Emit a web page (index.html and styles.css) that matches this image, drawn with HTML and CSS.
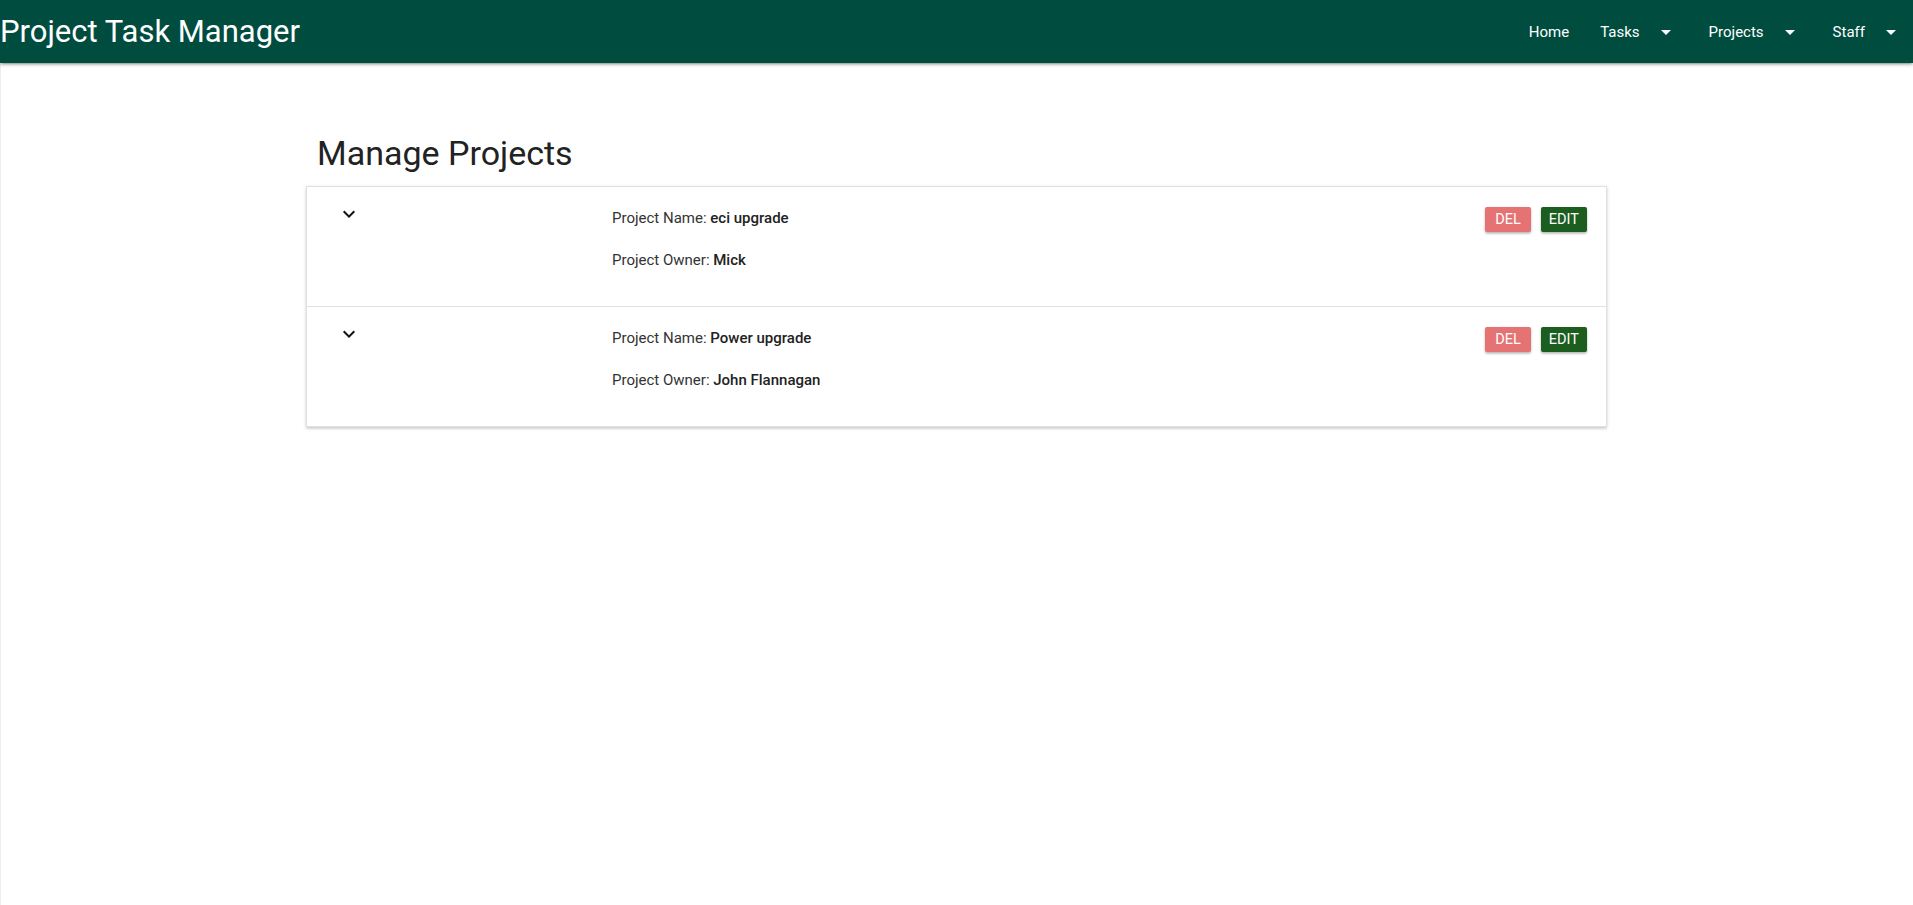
FILE: index.html
```html
<!DOCTYPE html>
<html lang="en">
<head>
<meta charset="utf-8">
<title>Project Task Manager</title>
<link rel="stylesheet" href="styles.css">
</head>
<body>
<nav class="navbar">
  <a class="brand" href="#">Project Task Manager</a>
  <ul class="nav-links">
    <li><a href="#">Home</a></li>
    <li><a href="#">Tasks<svg class="caret" viewBox="0 0 24 24" width="24" height="24"><path d="M7 10l5 5 5-5z" fill="#fff"/></svg></a></li>
    <li><a href="#">Projects<svg class="caret" viewBox="0 0 24 24" width="24" height="24"><path d="M7 10l5 5 5-5z" fill="#fff"/></svg></a></li>
    <li><a href="#" class="last">Staff<svg class="caret" viewBox="0 0 24 24" width="24" height="24"><path d="M7 10l5 5 5-5z" fill="#fff"/></svg></a></li>
  </ul>
</nav>
<main class="page">
  <div class="container">
    <h1 class="title">Manage Projects</h1>
    <ul class="collection">
      <li class="item">
        <div class="toggle"><svg viewBox="0 0 24 24" width="24" height="24"><path d="M16.59 8.59L12 13.17 7.41 8.59 6 10l6 6 6-6z" fill="#111"/></svg></div>
        <div class="info">
          <p>Project Name: <b>eci upgrade</b></p>
          <p>Project Owner: <b>Mick</b></p>
        </div>
        <div class="actions">
          <button class="btn del">DEL</button>
          <button class="btn edit">EDIT</button>
        </div>
      </li>
      <li class="item">
        <div class="toggle"><svg viewBox="0 0 24 24" width="24" height="24"><path d="M16.59 8.59L12 13.17 7.41 8.59 6 10l6 6 6-6z" fill="#111"/></svg></div>
        <div class="info">
          <p>Project Name: <b>Power upgrade</b></p>
          <p>Project Owner: <b>John Flannagan</b></p>
        </div>
        <div class="actions">
          <button class="btn del">DEL</button>
          <button class="btn edit">EDIT</button>
        </div>
      </li>
    </ul>
  </div>
</main>
</body>
</html>
```
FILE: styles.css
```css
* { box-sizing: border-box; }
html, body { margin: 0; padding: 0; }
body {
  font-family: Roboto, "Noto Sans", "Liberation Sans", sans-serif;
  background: #fff;
  color: rgba(0,0,0,0.87);
  overflow-x: hidden;
}
.navbar {
  position: relative;
  z-index: 2;
  height: 63px;
  background: #004d40;
  display: flex;
  align-items: center;
  justify-content: space-between;
  box-shadow: 0 2px 2px 0 rgba(0,0,0,0.14), 0 3px 1px -2px rgba(0,0,0,0.12), 0 1px 5px 0 rgba(0,0,0,0.2);
  overflow: hidden;
}
.brand {
  color: #fff;
  text-decoration: none;
  font-size: 31px;
  line-height: 63px;
}
.nav-links {
  list-style: none;
  margin: 0 -5px 0 0;
  padding: 0;
  display: flex;
  height: 63px;
}
.nav-links a {
  display: flex;
  align-items: center;
  height: 63px;
  padding: 0 15px;
  color: #fff;
  text-decoration: none;
  font-size: 15px;
}
.nav-links li + li a { padding-left: 16px; }
.caret { margin-left: 14px; display: block; }
.page {
  border-left: 1px solid #ededed;
  min-height: calc(100vh - 63px);
  padding-top: 70px;
}
.container {
  width: 1301px;
  margin: 0 auto 0 305px;
}
.title {
  font-size: 34px;
  font-weight: 400;
  color: #222;
  margin: 0 0 13px 11px;
  line-height: 40px;
}
.collection {
  list-style: none;
  margin: 0;
  padding: 0;
  border: 1px solid #e0e0e0;
  box-shadow: 0 2px 2px 0 rgba(0,0,0,0.10), 0 1px 4px 0 rgba(0,0,0,0.12);
}
.item {
  display: flex;
  height: 120px;
  border-bottom: 1px solid #e0e0e0;
}
.item:last-child { border-bottom: none; height: 119px; }
.toggle {
  width: 305px;
  padding: 15px 0 0 30px;
}
.toggle svg { display: block; }
.info {
  flex: 1;
  padding-top: 21px;
}
.info p {
  margin: 0 0 21px 0;
  font-size: 15px;
  line-height: 21px;
  color: #333;
}
.info b {
  font-weight: 500;
  color: #222;
}
.actions {
  display: flex;
  gap: 10px;
  padding: 20px 19px 0 0;
  align-items: flex-start;
}
.btn {
  border: none;
  border-radius: 2px;
  height: 25px;
  font-family: Roboto, "Noto Sans", "Liberation Sans", sans-serif;
  font-size: 14.5px;
  font-weight: 400;
  color: #fff;
  line-height: 25px;
  box-shadow: 0 2px 2px 0 rgba(0,0,0,0.14), 0 1px 3px 0 rgba(0,0,0,0.18);
  cursor: pointer;
}
.btn.del { background: #e57373; padding: 0 10px; }
.btn.edit { background: #1b5e20; padding: 0 8px; }
```
